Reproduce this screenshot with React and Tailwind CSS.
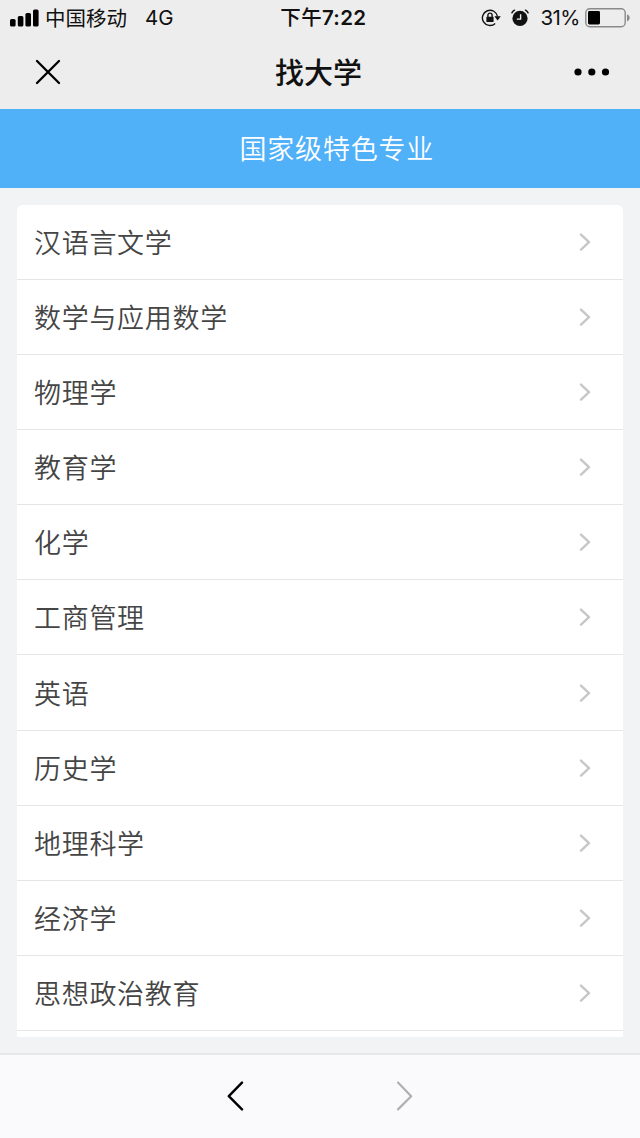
const majors = [
  '汉语言文学',
  '数学与应用数学',
  '物理学',
  '教育学',
  '化学',
  '工商管理',
  '英语',
  '历史学',
  '地理科学',
  '经济学',
  '思想政治教育',
];

function SignalBars() {
  return (
    <svg className="w-[29px] h-[18px] shrink-0" viewBox="0 0 29 18">
      <rect x="0" y="10" width="5.6" height="7.6" rx="1.6" />
      <rect x="7.8" y="7" width="5.6" height="10.6" rx="1.6" />
      <rect x="15.4" y="4" width="5.6" height="13.6" rx="1.6" />
      <rect x="23" y="0.5" width="5.6" height="17.1" rx="1.6" />
    </svg>
  );
}

function RotationLock() {
  return (
    <svg className="w-5 h-[18px] shrink-0" viewBox="0 0 20 18" fill="none" stroke="#111" strokeWidth="1.4">
      <path d="M16.5 7.6A7.6 7.6 0 1 0 14.2 14.4" />
      <path d="M13.4 7.2h6.4l-3.2 4.2z" fill="#111" stroke="none" />
      <rect x="5.4" y="7.8" width="7.2" height="5.2" rx="0.6" fill="#111" stroke="none" />
      <path d="M6.9 8V6.2a2.1 2.1 0 0 1 4.2 0V8" strokeWidth="1.4" />
    </svg>
  );
}

function AlarmClock() {
  return (
    <svg className="w-[18px] h-[18px] shrink-0" viewBox="0 0 18 18" fill="none">
      <circle cx="9" cy="9.4" r="7.6" fill="#111" />
      <path d="M9.6 5.2v4.9H5.8" stroke="#ededed" strokeWidth="1.4" />
      <path d="M0.9 3.8a6 6 0 0 1 2.6-2.6M14.5 1.2a6 6 0 0 1 2.6 2.6" stroke="#111" strokeWidth="1.5" strokeLinecap="round" />
    </svg>
  );
}

function Battery() {
  return (
    <svg className="w-[46px] h-5 shrink-0" viewBox="0 0 46 20">
      <rect x="0.8" y="0.8" width="39.4" height="18" rx="4" fill="none" stroke="#8a8a8a" strokeWidth="1.4" />
      <rect x="3" y="3" width="12" height="13.4" rx="1.4" fill="#000" />
      <path d="M42 6.2q2.8 1.2 2.8 3.6t-2.8 3.6z" fill="#8a8a8a" />
    </svg>
  );
}

function StatusBar() {
  return (
    <div className="grid grid-cols-3 items-center h-[35px] text-[20.5px] text-[#111]">
      <div className="flex items-center pl-[10px]">
        <SignalBars />
        <span className="ml-[6px] whitespace-nowrap">中国移动</span>
        <span className="ml-[18px] pt-[2px] font-['Inter','Noto_Sans_CJK_SC',sans-serif]">4G</span>
      </div>
      <div className="pl-[67px] pt-[2px] whitespace-nowrap font-medium tracking-[0.3px] font-['Inter','Noto_Sans_CJK_SC',sans-serif]">下午<span className="font-semibold">7:22</span></div>
      <div className="flex items-center justify-end pr-[9px]">
        <RotationLock />
        <span className="ml-[10px] mr-[11px]"><AlarmClock /></span>
        <span className="mr-[5px] pt-[2px] font-['Inter',sans-serif] tracking-tight">31%</span>
        <Battery />
      </div>
    </div>
  );
}

function NavBar() {
  return (
    <div className="flex items-center justify-between h-[73px] pl-[35px] pr-[30px]">
      <svg className="w-[26px] h-[26px]" viewBox="0 0 26 26" stroke="#000" strokeWidth="2.3" strokeLinecap="round">
        <path d="M2 2l22 22M24 2L2 24" />
      </svg>
      <h1 className="pl-[2px] text-[29px] leading-none font-medium text-[#111]">找大学</h1>
      <svg className="w-[36px] h-2" viewBox="0 0 36 8">
        <circle cx="4" cy="4" r="3.6" />
        <circle cx="17.8" cy="4" r="3.6" />
        <circle cx="31.5" cy="4" r="3.6" />
      </svg>
    </div>
  );
}

function MajorRow({ name }) {
  return (
    <li className="flex items-center justify-between h-[75.08px] shrink-0 pl-[17px] pr-[32px] border-b border-[#e6e6e6]">
      <span className="pb-[1px] text-[27px] leading-none tracking-[0.7px] font-[350] text-[#454545]">{name}</span>
      <svg className="w-[12px] h-[18px]" viewBox="0 0 12 18" fill="none" stroke="#c7c7c9" strokeWidth="2.4" strokeLinecap="round" strokeLinejoin="round">
        <path d="M2 1.6l8 7.6-8 7.4" />
      </svg>
    </li>
  );
}

export default function App() {
  return (
    <div className="flex flex-col w-[640px] h-[1138px] overflow-hidden bg-[#f2f3f5] font-['Noto_Sans_CJK_SC',sans-serif]">
      <header className="h-[109px] shrink-0 bg-[#ededed]">
        <StatusBar />
        <NavBar />
      </header>

      <div className="flex items-center h-[79px] shrink-0 pl-[239.5px] bg-[#50b1f9]">
        <h2 className="pb-[2px] text-[27px] leading-none tracking-[0.8px] font-[350] text-white">国家级特色专业</h2>
      </div>

      <main className="flex-1 min-h-0 px-[17px] pt-[17px] pb-[16px]">
        <ul className="flex flex-col h-full overflow-hidden rounded-t-md bg-white">
          {majors.map((name) => (
            <MajorRow key={name} name={name} />
          ))}
        </ul>
      </main>

      <footer className="flex items-center justify-between h-[85px] shrink-0 px-[226px] pb-[2px] border-t-2 border-[#e6e7e9] bg-[#fafafc]">
        <svg className="w-[18px] h-[30px]" viewBox="0 0 18 30" fill="none" stroke="#000" strokeWidth="2.4" strokeLinecap="round" strokeLinejoin="round">
          <path d="M16 1.6L2.8 15.2 16 28.4" />
        </svg>
        <svg className="w-[18px] h-[30px]" viewBox="0 0 18 30" fill="none" stroke="#b0b0b2" strokeWidth="2.2" strokeLinecap="round" strokeLinejoin="round">
          <path d="M2 1.6l13.2 13.6L2 28.4" />
        </svg>
      </footer>
    </div>
  );
}
